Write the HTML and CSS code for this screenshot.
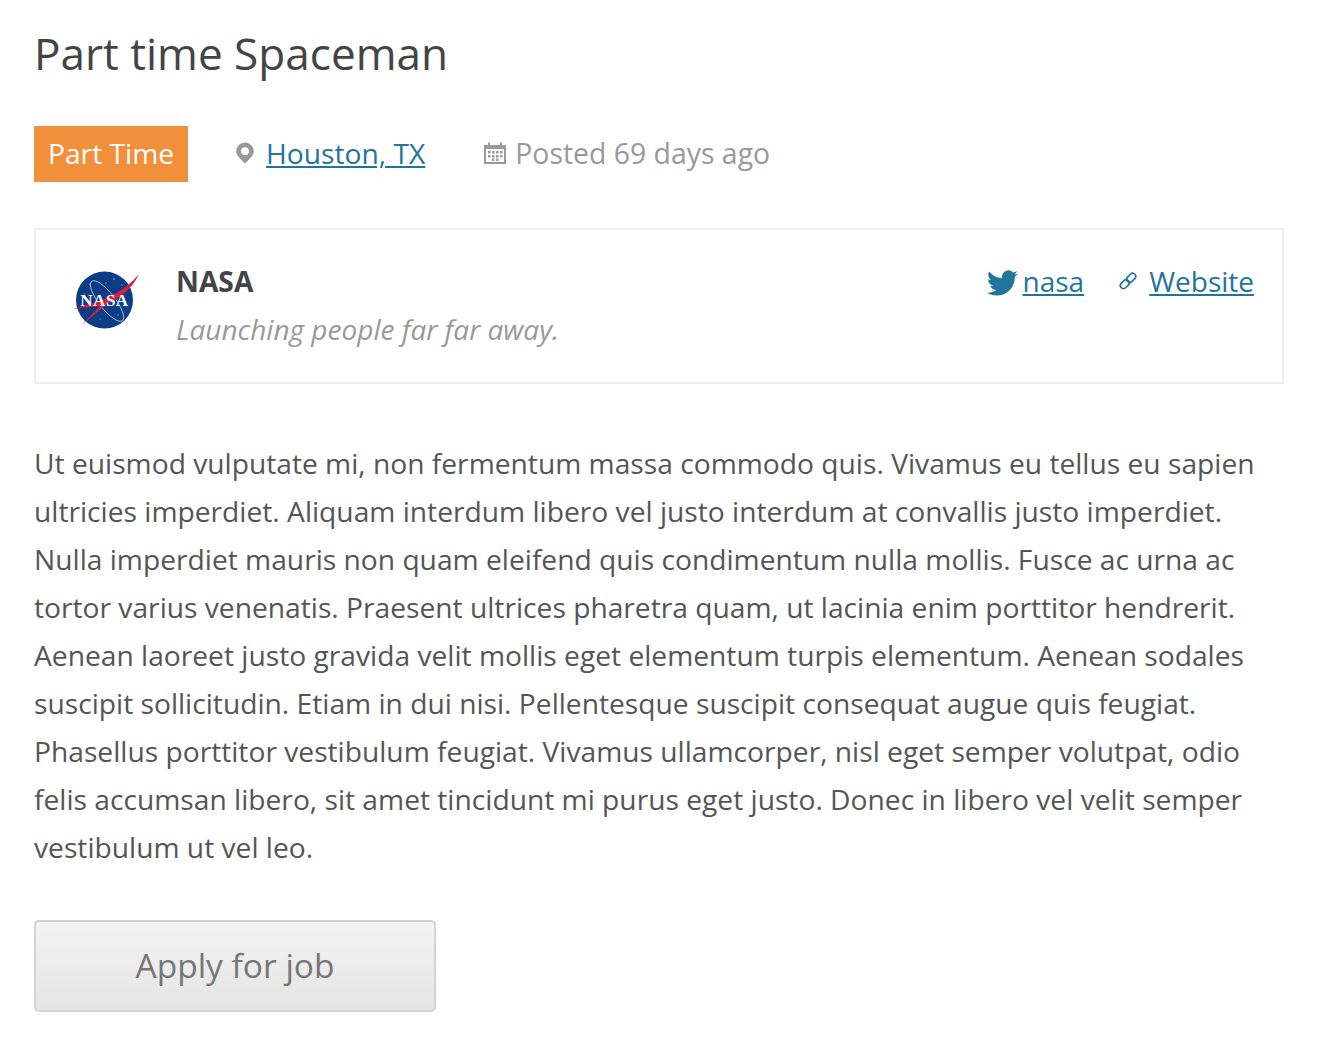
FILE: index.html
```html
<!DOCTYPE html>
<html lang="en">
<head>
    <meta charset="UTF-8">
    <title>Part time Spaceman</title>
    <link rel="stylesheet" href="styles.css">
</head>
<body>
    <div id="container">
        <h1>Part time Spaceman</h1>

        <div class="job-meta">
            <span class="job-type">Part Time</span>
            <span class="location">
                <svg class="icon-pin" width="18" height="22" viewBox="0 0 18 22"><path fill-rule="evenodd" d="M9 0.500a8.800 8.800 0 0 1 8.800 8.800c0 4-3.800 7.400-8.800 12.200C4 16.700 0.200 13.300 0.200 9.300A8.800 8.800 0 0 1 9 0.500zM9 5.300a3.900 3.900 0 1 0 0 7.800a3.900 3.900 0 0 0 0-7.800z"/></svg>
                <a href="#">Houston, TX</a>
            </span>
            <span class="posted">
                <svg class="icon-cal" width="22" height="22" viewBox="0 0 22 22"><path fill-rule="evenodd" d="M0 3h4V0.500h2V3h10V0.500h2V3h4v19H0zM2 7v13h18V7z"/><path d="M4 9h2.500v2.500H4zM8 9h2.500v2.500H8zM12 9h2.500v2.500H12zM16 9h2.500v2.500H16zM4 13h2.500v2.500H4zM8 13h2.500v2.500H8zM12 13h2.500v2.500H12zM16 13h2.500v2.500H16zM8 16.500h2.500V19H8zM12 16.500h2.500V19H12z"/></svg>
                Posted 69 days ago
            </span>
        </div>

        <div class="company">
            <svg class="logo" width="70" height="70" viewBox="0 0 70 70">
                <circle cx="34.500" cy="35" r="28.500" fill="#0b3d86"/>
                <ellipse cx="37" cy="36" rx="25" ry="8" fill="none" stroke="#c4d0e4" stroke-width="0.800" transform="rotate(52 37 36)"/>
                <g fill="#dfe6f2">
                    <circle cx="20" cy="19" r="0.600"/>
                    <circle cx="44" cy="14" r="0.700"/>
                    <circle cx="52" cy="20" r="0.500"/>
                    <circle cx="15" cy="29" r="0.500"/>
                    <circle cx="48" cy="50" r="0.600"/>
                    <circle cx="30" cy="54" r="0.500"/>
                    <circle cx="36" cy="18" r="0.500"/>
                </g>
                <path d="M3 44 C26 38 52 30 69 9 C62 24 50 33 37 39 L12 60 L30 41 Z" fill="#d9203a"/>
                <text x="34.500" y="41" class="logo-text">NASA</text>
            </svg>
            <div class="company-info">
                <strong>NASA</strong>
                <em>Launching people far far away.</em>
            </div>
            <div class="company-links">
                <svg class="icon-bird" width="31" height="26" viewBox="0 2 24 20"><path d="M23.953 4.570a10 10 0 0 1-2.825.775 4.958 4.958 0 0 0 2.163-2.723c-.951.555-2.005.959-3.127 1.184a4.920 4.920 0 0 0-8.384 4.482C7.690 8.095 4.067 6.130 1.640 3.162a4.822 4.822 0 0 0-.666 2.475c0 1.710.870 3.213 2.188 4.096a4.904 4.904 0 0 1-2.228-.616v.060a4.923 4.923 0 0 0 3.946 4.827 4.996 4.996 0 0 1-2.212.085 4.936 4.936 0 0 0 4.604 3.417 9.867 9.867 0 0 1-6.102 2.105c-.390 0-.779-.023-1.170-.067a13.995 13.995 0 0 0 7.557 2.209c9.053 0 13.998-7.496 13.998-13.985 0-.210 0-.420-.015-.630A9.935 9.935 0 0 0 24 4.590z"/></svg>
                <a href="#" class="bird-link">nasa</a>
                <svg class="icon-link" width="18" height="18" viewBox="0 0 18 18"><g fill="none" stroke-width="1.700"><rect x="7.200" y="2.700" width="10" height="6.200" rx="3.100" transform="rotate(-45 12.200 5.800)"/><rect x="0.800" y="9.100" width="10" height="6.200" rx="3.100" transform="rotate(-45 5.800 12.200)"/></g></svg>
                <a href="#">Website</a>
            </div>
        </div>

        <p class="description">Ut euismod vulputate mi, non fermentum massa commodo quis. Vivamus eu tellus eu sapien ultricies imperdiet. Aliquam interdum libero vel justo interdum at convallis justo imperdiet. Nulla imperdiet mauris non quam eleifend quis condimentum nulla mollis. Fusce ac urna ac tortor varius venenatis. Praesent ultrices pharetra quam, ut lacinia enim porttitor hendrerit. Aenean laoreet justo gravida velit mollis eget elementum turpis elementum. Aenean sodales suscipit sollicitudin. Etiam in dui nisi. Pellentesque suscipit consequat augue quis feugiat. Phasellus porttitor vestibulum feugiat. Vivamus ullamcorper, nisl eget semper volutpat, odio felis accumsan libero, sit amet tincidunt mi purus eget justo. Donec in libero vel velit semper vestibulum ut vel leo.</p>

        <button class="apply">Apply for job</button>
    </div>
</body>
</html>
```

FILE: styles.css
```css
body {
    font-family: "Open Sans", sans-serif;
    font-size: 28.2px;
    line-height: 48px;
    color: #555;
    background-color: #fff;
    margin: 0;
}

a {
    color: #21759b;
}

#container {
    width: 1250px;
    padding: 0 0 36px 34px;
}

h1 {
    font-size: 44.1px;
    font-weight: 400;
    line-height: 60px;
    color: #444;
    margin: 0;
    padding-top: 23px;
}

.job-meta {
    display: flex;
    align-items: center;
    margin-top: 43px;
    height: 56px;
}

.job-type {
    background-color: #f18f3b;
    color: #fff;
    font-weight: 500;
    padding: 3px 14px 5px;
    margin-right: 48px;
}

.location,
.posted {
    display: flex;
    align-items: center;
    padding-bottom: 2px;
}

.location {
    margin-right: 59px;
}

.posted {
    font-size: 28.4px;
    color: #999;
}

.icon-pin {
    fill: #999;
    margin-right: 12px;
}

.icon-cal {
    fill: #999;
    margin-right: 9px;
}

.company {
    display: flex;
    align-items: flex-start;
    box-sizing: border-box;
    height: 156px;
    margin-top: 46px;
    padding: 27px 28px 0 34px;
    border: 2px solid #eee;
}

.logo {
    flex: none;
    margin: 8px 36px 0 0;
}

.logo-text {
    font-family: "Liberation Serif", serif;
    font-size: 17px;
    font-weight: 700;
    fill: #fff;
    text-anchor: middle;
    letter-spacing: 0.500px;
}

.company-info {
    flex: 1;
}

.company-info strong {
    display: block;
    color: #444;
}

.company-info em {
    display: block;
    font-size: 28px;
    color: #999;
}

.company-links {
    display: flex;
    align-items: center;
    font-size: 28px;
}

.icon-bird {
    fill: #21759b;
    margin: 3px 5px 0 0;
}

.icon-link {
    stroke: #21759b;
    margin: 0 12px 0 35px;
}

.description {
    margin: 55px 0 0;
}

.apply {
    display: block;
    width: 402px;
    height: 92px;
    margin-top: 49px;
    padding-bottom: 3px;
    border: 2px solid #d3d3d3;
    border-radius: 5px;
    background: linear-gradient(#f3f3f3, #e5e5e5);
    color: #777;
    font-family: "Open Sans", sans-serif;
    font-size: 33.5px;
}
```
